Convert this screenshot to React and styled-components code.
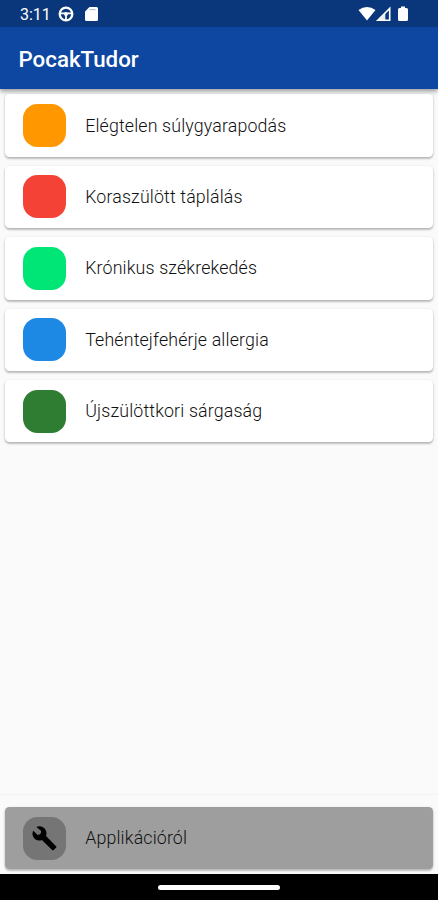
import React from 'react';
import styled, { createGlobalStyle } from 'styled-components';

const GlobalStyle = createGlobalStyle`
   * {
      box-sizing: border-box;
   }

   body {
      margin: 0;
      background: #fafafa;
      font-family: Roboto, 'Noto Sans', sans-serif;
   }
`;

const Screen = styled.div`
   display: flex;
   flex-direction: column;
   height: 900px;
   background: #fafafa;
   overflow: hidden;
`;

const Header = styled.header`
   flex: none;
   background: #0d47a1;
   box-shadow: 0 2px 4px rgba(0, 0, 0, 0.3), 0 4px 6px rgba(0, 0, 0, 0.1);
`;

const StatusBar = styled.div`
   display: flex;
   align-items: center;
   height: 27px;
   padding: 1px 30px 0 20px;
   color: #fff;
   background: #0a367b;
`;

const Clock = styled.span`
   width: 38px;
   padding-top: 1px;
   font-size: 16px;
   line-height: 20px;
`;

const StatusIcon = styled.svg`
   flex: none;
   display: block;
   width: ${({ $width }) => $width}px;
   height: 16px;
   margin-left: ${({ $gap }) => $gap || 0}px;
`;

const Spacer = styled.div`
   flex: 1;
`;

const Title = styled.h1`
   height: 62px;
   margin: 0;
   padding-left: 18.5px;
   color: #fff;
   font-size: 22.3px;
   font-weight: 500;
   line-height: 64px;
`;

const List = styled.main`
   display: flex;
   flex: 1;
   flex-direction: column;
   gap: 9px;
   padding: 5.4px 4.6px 0 5.2px;
`;

const Card = styled.div`
   display: flex;
   align-items: center;
   height: 62.4px;
   padding-left: 18px;
   border-radius: 4.5px;
   background: ${({ $background }) => $background || '#fff'};
   box-shadow: 0 1px 3px rgba(0, 0, 0, 0.18), 0 2px 2px rgba(0, 0, 0, 0.16);
`;

const Tile = styled.div`
   display: flex;
   align-items: center;
   justify-content: center;
   width: 43px;
   height: 43px;
   margin-right: 19px;
   border-radius: 14.5px;
   color: #000;
   background: ${({ $color }) => $color};
`;

const ToolIcon = styled.svg`
   display: block;
   width: 26.8px;
   height: 26.8px;
   fill: currentColor;
`;

const Label = styled.span`
   color: #111;
   font-size: 17.8px;
   font-weight: 300;
   line-height: 24px;
   letter-spacing: 0.15px;
`;

const Footer = styled.footer`
   flex: none;
   height: 80px;
   padding: 12px 4.6px 0 5.2px;
   border-top: 1px solid #f3f3f3;
`;

const NavigationBar = styled.div`
   display: flex;
   flex: none;
   justify-content: center;
   height: 26px;
   padding-top: 11px;
   background: #000;
`;

const Handle = styled.div`
   width: 122px;
   height: 4.5px;
   border-radius: 3px;
   background: #fff;
`;

const topics = [
   { label: 'Elégtelen súlygyarapodás', color: '#ff9800' },
   { label: 'Koraszülött táplálás', color: '#f44336' },
   { label: 'Krónikus székrekedés', color: '#00e676' },
   { label: 'Tehéntejfehérje allergia', color: '#1e88e5' },
   { label: 'Újszülöttkori sárgaság', color: '#2e7d32' },
];

const WheelIcon = () => (
   <StatusIcon $width={16} viewBox="0 0 16 16" fill="none" stroke="currentColor">
      <circle cx="8" cy="8" r="6.3" strokeWidth="2.3" />
      <path d="M2 7.4h12M8 8v6" strokeWidth="1.8" />
      <circle cx="8" cy="8" r="2" fill="currentColor" stroke="none" />
   </StatusIcon>
);

const SdCardIcon = () => (
   <StatusIcon $width={13} $gap={11} viewBox="0 0 13 16">
      <path d="M4.5 1H11.5Q13 1 13 2.5V13.5Q13 15 11.5 15H1.5Q0 15 0 13.5V5.5Z" fill="currentColor" />
      <path d="M4.5 3.6h6" stroke="#0a367b" strokeWidth="1.2" opacity="0.3" />
   </StatusIcon>
);

const WifiIcon = () => (
   <StatusIcon $width={18} viewBox="0 0 18 16">
      <path d="M0.5 4Q9-2 17.5 4L9 14.5Z" fill="currentColor" />
   </StatusIcon>
);

const SignalIcon = () => (
   <StatusIcon $width={15} viewBox="0 0 15 16">
      <path d="M1.8 14.2L13.7 2.5V14.2Z" fill="none" stroke="currentColor" strokeWidth="1.6" />
      <path d="M2 14.5L9.3 7.2V14.5Z" fill="currentColor" opacity="0.9" />
   </StatusIcon>
);

const BatteryIcon = () => (
   <StatusIcon $width={10} $gap={7} viewBox="0 0 10 16">
      <path d="M3 0.5h4V2h1.5Q10 2 10 3.5v10Q10 15 8.5 15h-7Q0 15 0 13.5v-10Q0 2 1.5 2H3Z" fill="currentColor" />
   </StatusIcon>
);

const WrenchIcon = () => (
   <ToolIcon viewBox="0 0 24 24">
      <path d="M22.4 19l-8.9-9.1c.9-2.3.4-5-1.5-6.9-1.9-1.9-4.8-2.3-7.2-1.2L8.9 5.2Q9.4 8.7 6 9L2 5.2C.8 7.4 1.2 10.2 3.1 12.1c1.9 1.9 4.5 2.3 6.7 1.4l9.1 8.9c.4.4 1 .4 1.4 0l2.1-2.1c.5-.4.5-.9 0-1.3z" />
   </ToolIcon>
);

const App = () => {
   return (
      <>
         <GlobalStyle />
         <Screen>
            <Header>
               <StatusBar>
                  <Clock>3:11</Clock>
                  <WheelIcon />
                  <SdCardIcon />
                  <Spacer />
                  <WifiIcon />
                  <SignalIcon />
                  <BatteryIcon />
               </StatusBar>
               <Title>PocakTudor</Title>
            </Header>
            <List>
               {topics.map(({ label, color }) => (
                  <Card key={label}>
                     <Tile $color={color} />
                     <Label>{label}</Label>
                  </Card>
               ))}
            </List>
            <Footer>
               <Card $background="#9e9e9e">
                  <Tile $color="#757575">
                     <WrenchIcon />
                  </Tile>
                  <Label>Applikációról</Label>
               </Card>
            </Footer>
            <NavigationBar>
               <Handle />
            </NavigationBar>
         </Screen>
      </>
   );
};

export default App;
